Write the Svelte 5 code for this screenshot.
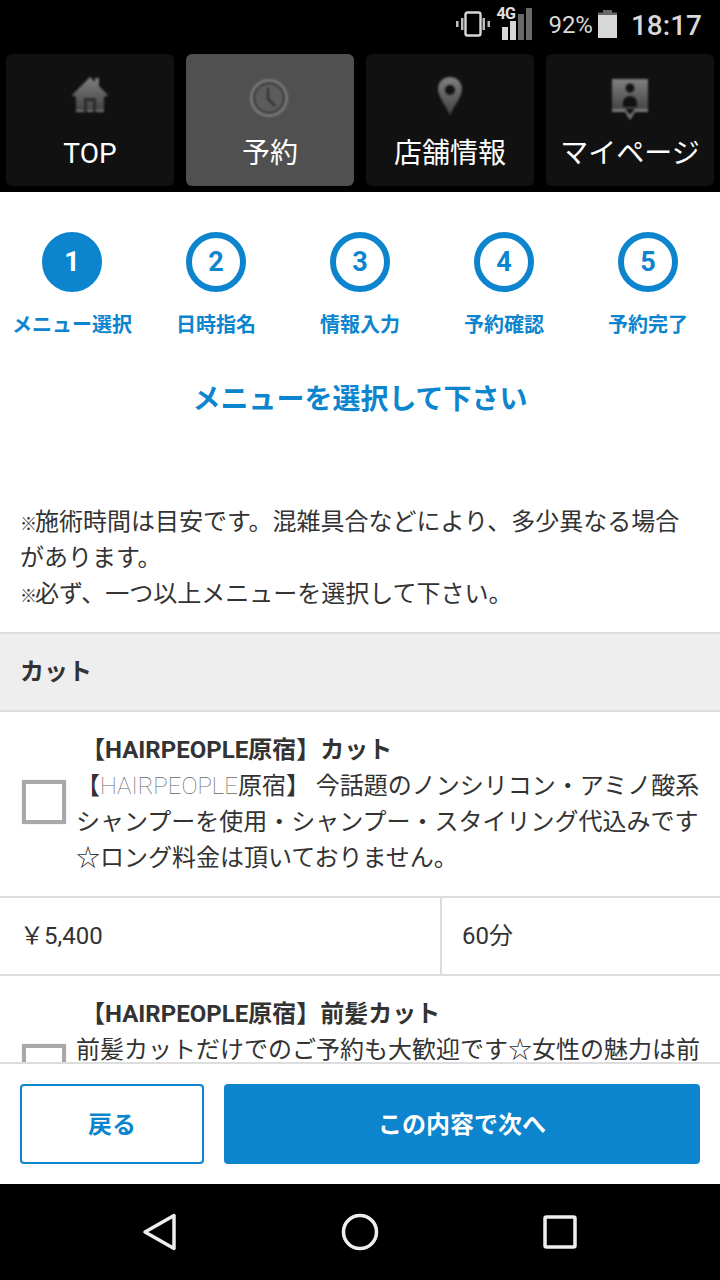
<script>
	const tabs = [
		{ label: 'TOP', icon: 'home' },
		{ label: '予約', icon: 'clock', active: true },
		{ label: '店舗情報', icon: 'pin' },
		{ label: 'マイページ', icon: 'user' }
	];
	const steps = ['メニュー選択', '日時指名', '情報入力', '予約確認', '予約完了'];
</script>

<div class="screen">
	<div class="status">
		<svg class="vibrate" width="34" height="26" viewBox="0 0 34 26">
			<rect x="9.5" y="1.5" width="15" height="23" rx="2" fill="none" stroke="#d8d8d8" stroke-width="2.4" />
			<path d="M5 7h2.5v12H5zM26.5 7H29v12h-2.5zM0 10h2.5v6H0zM31.5 10H34v6h-2.5z" fill="#bdbdbd" />
		</svg>
		<div class="signal">
			<span class="lte">4G</span>
			<svg width="36" height="32" viewBox="0 0 36 32">
				<rect x="6" y="19" width="6" height="13" fill="#d8d8d8" />
				<rect x="14" y="13" width="6" height="19" fill="#d8d8d8" />
				<rect x="22" y="6" width="6" height="26" fill="#6a6a6a" />
				<rect x="30" y="0" width="6" height="32" fill="#6a6a6a" />
			</svg>
		</div>
		<span class="pct">92%</span>
		<svg class="battery" width="19" height="28" viewBox="0 0 19 28">
			<path d="M5 0h9v2.5h5V5H0V2.5h5z" fill="#666" />
			<rect y="5" width="19" height="23" fill="#d8d8d8" />
		</svg>
		<span class="time">18:17</span>
	</div>

	<nav class="tabs">
		{#each tabs as tab}
			<div class="tab" class:active={tab.active}>
				<svg width="44" height="44" viewBox="0 0 44 44">
					<defs>
						<linearGradient id="g-{tab.icon}" x1="0" y1="0" x2="0" y2="1">
							<stop offset="0" stop-color="#808080" />
							<stop offset="1" stop-color="#404040" />
						</linearGradient>
					</defs>
					{#if tab.icon === 'home'}
						<path d="M4 21 22 3l5 5V4h4v8l9 9-1.5 1.5H36V38H8V22.500H5.500z" fill="url(#g-home)" />
						<path d="M16 38V24h12v14h-3V27h-6v11z" fill="#2a2a2a" />
						<path d="M8 36h8v2H8zM19 36h6v2h-6zM28 36h8v2h-8z" fill="#777" />
					{:else if tab.icon === 'clock'}
						<circle cx="21" cy="24" r="19" fill="#7a7a7a" />
						<circle cx="21" cy="24" r="16" fill="#363636" />
						<circle cx="21" cy="24" r="14" fill="#5c5c5c" />
						<path d="M20 14v11l7 7" fill="none" stroke="#2e2e2e" stroke-width="2" />
					{:else if tab.icon === 'pin'}
						<path d="M22 3c7 0 12 5 12 12 0 8-8 16-12 27-4-11-12-19-12-27C10 8 15 3 22 3z" fill="url(#g-pin)" />
						<circle cx="22" cy="16" r="5" fill="#111" />
					{:else}
						<path d="M4 5h36v33H4z" fill="url(#g-user)" />
						<circle cx="22" cy="14" r="4.500" fill="#111" />
						<path d="M15 33v-4c0-4 3-7 7-7s7 3 7 7v4z" fill="#111" />
						<path d="M4 38h13l5 8 5-8h13v-3H4z" fill="#7c7c7c" />
						<path d="M17 35h10l-5 6z" fill="#111" />
					{/if}
				</svg>
				<span>{tab.label}</span>
			</div>
		{/each}
	</nav>

	<main>
		<ol class="steps">
			{#each steps as step, i}
				<li class:current={i === 0}>
					<span class="num">{i + 1}</span>
					<span class="step-label">{step}</span>
				</li>
			{/each}
		</ol>

		<h1>メニューを選択して下さい</h1>

		<p class="notes">
			<span class="mark">※</span>施術時間は目安です。混雑具合などにより、多少異なる場合があります。<br />
			<span class="mark">※</span>必ず、一つ以上メニューを選択して下さい。
		</p>

		<h2>カット</h2>

		<div class="menu">
			<span class="check"></span>
			<div class="body">
				<h3>【HAIRPEOPLE原宿】カット</h3>
				<p>【<span class="thin">HAIRPEOPLE</span>原宿】 今話題のノンシリコン・アミノ酸系シャンプーを使用・シャンプー・スタイリング代込みです☆ロング料金は頂いておりません。</p>
			</div>
		</div>
		<div class="price">
			<span>￥5,400</span>
			<span>60分</span>
		</div>

		<div class="menu">
			<span class="check"></span>
			<div class="body">
				<h3>【HAIRPEOPLE原宿】前髪カット</h3>
				<p>前髪カットだけでのご予約も大歓迎です☆女性の魅力は前髪で決まります。</p>
			</div>
		</div>
	</main>

	<footer>
		<button class="back">戻る</button>
		<button class="next">この内容で次へ</button>
	</footer>

	<div class="sysnav">
		<svg width="36" height="38" viewBox="0 0 36 38">
			<path d="M3 19 32 2.5v33z" fill="none" stroke="#eee" stroke-width="3.5" stroke-linejoin="round" />
		</svg>
		<svg width="38" height="38" viewBox="0 0 38 38">
			<circle cx="19" cy="19" r="16.5" fill="none" stroke="#eee" stroke-width="3.5" />
		</svg>
		<svg width="34" height="34" viewBox="0 0 34 34">
			<rect x="2" y="2" width="30" height="30" rx="1.5" fill="none" stroke="#eee" stroke-width="3.5" />
		</svg>
	</div>
</div>

<style>
	:global(body) {
		background: #fff;
	}

	.screen {
		width: 720px;
		height: 1280px;
		display: flex;
		flex-direction: column;
		overflow: hidden;
		font-family: Roboto, 'Noto Sans CJK JP', sans-serif;
		color: #333;
	}

	.status {
		height: 54px;
		flex: none;
		background: #000;
		display: flex;
		align-items: center;
		justify-content: flex-end;
		padding: 0 18px 4px 0;
		box-sizing: border-box;
		color: #d8d8d8;
	}

	.vibrate {
		margin: -3px 6px 0 0;
	}

	.signal {
		position: relative;
		width: 36px;
		height: 33px;
		margin: -3px 16px 0 0;
		display: flex;
		align-items: flex-end;
	}

	.lte {
		position: absolute;
		left: 0;
		top: -2px;
		font-size: 16px;
		font-weight: 700;
		line-height: 18px;
		color: #e0e0e0;
		letter-spacing: -0.5px;
	}

	.pct {
		font-size: 24px;
		margin-right: 5px;
	}

	.battery {
		margin: -2px 14px 0 0;
	}

	.time {
		font-size: 28px;
		font-weight: 500;
	}

	.tabs {
		flex: none;
		background: #000;
		display: grid;
		grid-template-columns: repeat(4, 1fr);
		gap: 12px;
		padding: 0 6px 6px;
	}

	.tab {
		height: 132px;
		background: #111;
		border-radius: 6px;
		display: flex;
		flex-direction: column;
		align-items: center;
		padding-top: 20px;
		box-sizing: border-box;
		color: #fff;
		font-size: 28px;
		line-height: 40px;
	}

	.tab svg {
		filter: blur(0.8px);
		overflow: visible;
	}

	.tab span {
		margin-top: 16px;
		white-space: nowrap;
	}

	.tab.active {
		background: #505050;
	}

	main {
		flex: 1;
		min-height: 0;
		overflow: hidden;
		background: #fff;
	}

	.steps {
		list-style: none;
		margin: 0;
		padding: 40px 0 0;
		display: grid;
		grid-template-columns: repeat(5, 144px);
	}

	.steps li {
		display: flex;
		flex-direction: column;
		align-items: center;
		color: #0d85ce;
	}

	.num {
		width: 60px;
		height: 60px;
		box-sizing: border-box;
		border: 6px solid #0d85ce;
		border-radius: 50%;
		display: flex;
		align-items: center;
		justify-content: center;
		font-size: 27px;
		font-weight: 700;
	}

	.current .num {
		background: #0d85ce;
		color: #fff;
	}

	.step-label {
		margin-top: 19px;
		font-size: 20px;
		line-height: 28px;
		font-weight: 700;
		white-space: nowrap;
	}

	h1 {
		margin: 39px 0 0;
		text-align: center;
		font-size: 28px;
		line-height: 44px;
		font-weight: 700;
		color: #0d85ce;
	}

	.notes {
		margin: 82px 0 0;
		padding: 0 28px 0 20px;
		font-size: 24px;
		line-height: 36px;
	}

	.mark {
		font-size: 17px;
		line-height: 1;
		letter-spacing: -2px;
	}

	h2 {
		margin: 20px 0 0;
		height: 80px;
		box-sizing: border-box;
		border-top: 2px solid #ddd;
		border-bottom: 2px solid #ddd;
		background: #eee;
		padding-left: 20px;
		font-size: 24px;
		font-weight: 700;
		line-height: 76px;
	}

	.menu {
		height: 184px;
		box-sizing: border-box;
		display: flex;
		align-items: flex-start;
		padding: 20px 19px 0 22px;
	}

	.check {
		flex: none;
		width: 44px;
		height: 44px;
		box-sizing: border-box;
		border: 4px solid #a8a8a8;
		margin: 48px 10px 0 0;
		box-shadow: 0 0 1px #bbb;
	}

	.body {
		min-width: 0;
	}

	h3 {
		margin: 0 0 0 5px;
		font-size: 24px;
		line-height: 36px;
		font-weight: 700;
	}

	.body p {
		margin: 0;
		font-size: 24px;
		line-height: 36px;
	}

	.thin {
		font-weight: 100;
		color: #666;
	}

	.price {
		height: 80px;
		box-sizing: border-box;
		border-top: 2px solid #ddd;
		border-bottom: 2px solid #ddd;
		display: grid;
		grid-template-columns: 440px 1fr;
		font-size: 24px;
	}

	.price span {
		padding-left: 20px;
		line-height: 76px;
	}

	.price span + span {
		border-left: 2px solid #ddd;
	}

	footer {
		flex: none;
		height: 122px;
		box-sizing: border-box;
		border-top: 2px solid #ddd;
		background: #fff;
		display: flex;
		gap: 20px;
		padding: 20px 20px 0;
	}

	button {
		height: 80px;
		border-radius: 4px;
		font: 700 24px Roboto, 'Noto Sans CJK JP', sans-serif;
		border: 2px solid #0d85ce;
		padding: 0 0 3px;
	}

	.back {
		width: 184px;
		background: #fff;
		color: #0d85ce;
	}

	.next {
		flex: 1;
		background: #0d85ce;
		color: #fff;
	}

	.sysnav {
		flex: none;
		height: 96px;
		background: #000;
		display: grid;
		grid-template-columns: repeat(3, 1fr);
		padding: 0 60px;
		place-items: center;
	}
</style>
